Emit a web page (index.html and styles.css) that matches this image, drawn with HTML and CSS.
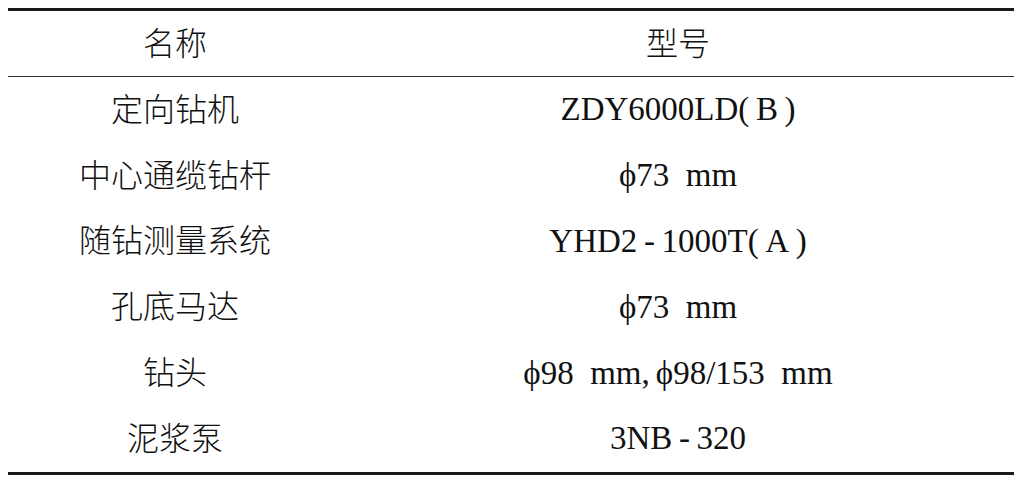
FILE: index.html
```html
<!DOCTYPE html>
<html lang="zh-CN">
<head>
  <meta charset="UTF-8" />
  <meta name="viewport" content="width=device-width, initial-scale=1.0"/>
  <title>设备型号</title>
  <link rel="stylesheet" href="styles.css">
</head>
<body>

  <table class="spec-table">
    <thead>
      <tr>
        <th class="col-name">名称</th>
        <th class="col-model">型号</th>
      </tr>
    </thead>
    <tbody>
      <tr>
        <td>定向钻机</td>
        <td class="model">ZDY6000LD(&thinsp;B&thinsp;)</td>
      </tr>
      <tr>
        <td>中心通缆钻杆</td>
        <td class="model">ϕ73&ensp;mm</td>
      </tr>
      <tr>
        <td>随钻测量系统</td>
        <td class="model">YHD2&thinsp;-&thinsp;1000T(&thinsp;A&thinsp;)</td>
      </tr>
      <tr>
        <td>孔底马达</td>
        <td class="model">ϕ73&ensp;mm</td>
      </tr>
      <tr>
        <td>钻头</td>
        <td class="model">ϕ98&ensp;mm<span class="cn-comma">,</span>ϕ98/153&ensp;mm</td>
      </tr>
      <tr>
        <td>泥浆泵</td>
        <td class="model">3NB&thinsp;-&thinsp;320</td>
      </tr>
    </tbody>
  </table>

</body>
</html>
```

FILE: styles.css
```css
body {
  margin: 8px;
  background: #fff;
  color: #111;
  font-family: "Liberation Serif", "Noto Sans CJK SC", serif;
}

.spec-table {
  width: 1006px;
  border-collapse: collapse;
  border-top: 3px solid #1a1a1a;
  border-bottom: 3px solid #1a1a1a;
}

.spec-table th,
.spec-table td {
  padding: 0;
  text-align: center;
  font-size: 32px;
  font-weight: 300;
  line-height: 1;
}

.spec-table th {
  height: 65px;
  border-bottom: 1.5px solid #333;
}

.spec-table td {
  height: 65.8px;
}

.spec-table td.model {
  font-size: 33px;
  font-weight: normal;
}

.col-name {
  width: 334px;
}

.cn-comma {
  margin-right: 6px;
}
```
